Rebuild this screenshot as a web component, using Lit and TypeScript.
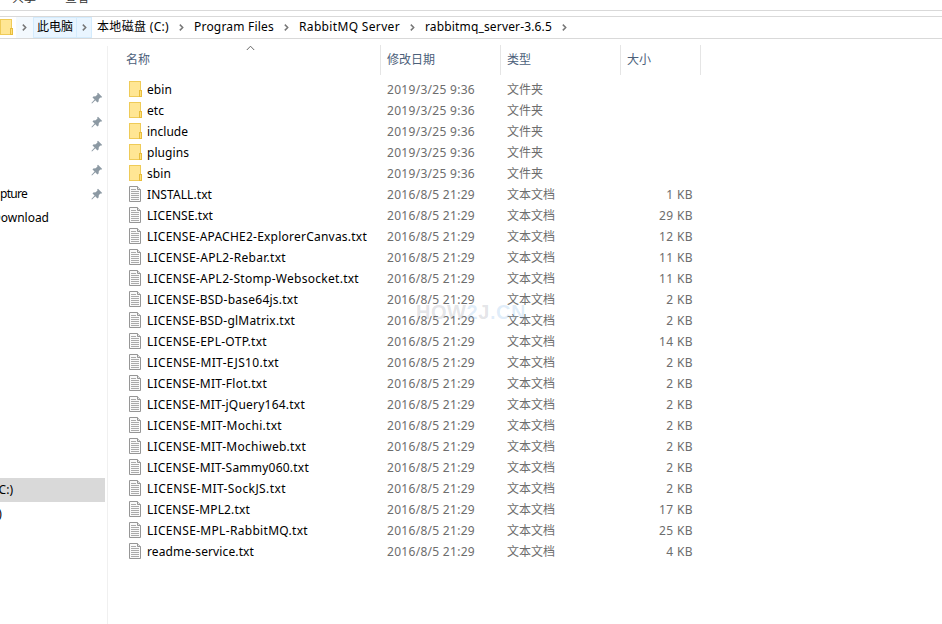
import { LitElement, html, css, svg } from "lit";
import { customElement } from "lit/decorators.js";

type Row = { name: string; size?: string; w: number };

const rows: Row[] = [
  { name: "ebin", w: 25 },
  { name: "etc", w: 17 },
  { name: "include", w: 41 },
  { name: "plugins", w: 42 },
  { name: "sbin", w: 24 },
  { name: "INSTALL.txt", size: "1 KB", w: 65 },
  { name: "LICENSE.txt", size: "29 KB", w: 66 },
  { name: "LICENSE-APACHE2-ExplorerCanvas.txt", size: "12 KB", w: 220 },
  { name: "LICENSE-APL2-Rebar.txt", size: "11 KB", w: 139 },
  { name: "LICENSE-APL2-Stomp-Websocket.txt", size: "11 KB", w: 212 },
  { name: "LICENSE-BSD-base64js.txt", size: "2 KB", w: 151 },
  { name: "LICENSE-BSD-glMatrix.txt", size: "2 KB", w: 148 },
  { name: "LICENSE-EPL-OTP.txt", size: "14 KB", w: 120 },
  { name: "LICENSE-MIT-EJS10.txt", size: "2 KB", w: 132 },
  { name: "LICENSE-MIT-Flot.txt", size: "2 KB", w: 120 },
  { name: "LICENSE-MIT-jQuery164.txt", size: "2 KB", w: 158 },
  { name: "LICENSE-MIT-Mochi.txt", size: "2 KB", w: 135 },
  { name: "LICENSE-MIT-Mochiweb.txt", size: "2 KB", w: 159 },
  { name: "LICENSE-MIT-Sammy060.txt", size: "2 KB", w: 162 },
  { name: "LICENSE-MIT-SockJS.txt", size: "2 KB", w: 139 },
  { name: "LICENSE-MPL2.txt", size: "17 KB", w: 103 },
  { name: "LICENSE-MPL-RabbitMQ.txt", size: "25 KB", w: 161 },
  { name: "readme-service.txt", size: "4 KB", w: 107 },
];

const crumbs: [string, number][] = [
  ["本地磁盘 (C:)", 72],
  ["Program Files", 80],
  ["RabbitMQ Server", 101],
  ["rabbitmq_server-3.6.5", 127],
];

const folder = svg`<svg class="ico" width="16" height="16" viewBox="0 0 16 16">
  <rect x="1.5" y=".5" width="11" height="15" fill="#ffe694" stroke="#efcb58"/>
  <rect x="11.5" y="9.5" width="2" height="6" fill="#ffe07a" stroke="#e8bd3c"/></svg>`;

const doc = svg`<svg class="ico" width="16" height="16" viewBox="0 0 16 16">
  <path d="M1.5 .5H9.5L12.5 3.5V15.5H1.5Z" fill="#fafafa" stroke="#969696"/>
  <path d="M9.5 .5V3.5H12.5" fill="#e4e4e4" stroke="#969696"/>
  <path d="M3 3.5H8M3 5.5H11M3 7.5H11M3 9.5H11M3 11.5H11M3 13.5H11" stroke="#aaa"/></svg>`;

const pin = svg`<svg width="12" height="12" viewBox="0 0 12 12">
  <path d="M7 .8L11.2 5L10 5.8L9.3 5.6L7.8 7.3L7.6 9.6L6.4 10.4L4.3 8.3L1 11.4L.4 10.9L3.6 7.5L1.5 5.5L2.3 4.4L4.7 4.2L6.5 2.6L6.2 1.6Z" fill="#8c99a3"/></svg>`;

const chevron = svg`<svg width="5" height="7" viewBox="0 0 5 7">
  <path d="M.8 .6L3.7 3.5L.8 6.4" fill="none" stroke="#777" stroke-width="1.5"/></svg>`;

@customElement("app-root")
export class AppRoot extends LitElement {
  static styles = css`
    :host { display: flex; flex-direction: column; position: relative; width: 942px; height: 624px; overflow: hidden; background: #fff; color: #000; font: 12px/21px "Noto Sans", "Noto Sans CJK SC", sans-serif; white-space: nowrap; }
    svg { display: block; flex: none; }
    .menu { height: 10px; flex: none; display: flex; gap: 29px; padding-left: 12px; border-bottom: 1px solid #d9d9d9; overflow: hidden; align-items: flex-end; color: #333; }
    .menu span { height: 21px; margin-bottom: 2px; }
    .address { height: 21px; flex: none; margin-top: 5px; display: flex; border: solid #d9d9d9; border-width: 1px 0; }
    .crumb { display: flex; align-items: center; }
    .crumb span { margin: -2px 4px 0; }
    .home { width: 14px; margin-left: -1px; margin-right: 3px; margin-top: -1px; }
    .arrow { width: 17px; display: flex; justify-content: center; align-items: center; padding-bottom: 1px; box-sizing: border-box; }
    .arrow.first { background: #f3f9fe; }
    .hot { background: #e9f5ff; box-shadow: inset 0 0 0 1px #d3ebfd; }
    .arrow.hot { width: 16px; margin-left: -1px; margin-right: 1px; }
    .main { flex: 1; display: flex; }
    .nav { width: 107px; border-right: 1px solid #f0f0f0; flex: none; margin-top: 7px; padding-top: 40px; overflow: hidden; }
    .item { height: 24px; display: flex; align-items: center; width: 105px; }
    .item .label { flex: 1; padding-bottom: 1px; }
    .item svg { margin-right: 2px; }
    .selected { background: #d9d9d9; }
    .gap { height: 248px; }
    .shift { margin-left: -5px; }
    .download { margin-left: -8px; padding-bottom: 3px; }
    .files { width: 593px; }
    .head { display: grid; grid-template-columns: 273px 120px 120px 80px; height: 30px; padding-top: 6px; margin-bottom: 4px; color: #4c607a; position: relative; }
    .head div { border-right: 1px solid #e5e5e5; padding-left: 6px; line-height: 30px; }
    .head div:first-child { padding-left: 18px; }
    .sort { position: absolute; left: 138px; top: 6px; }
    .row { display: grid; grid-template-columns: 273px 120px 120px 72px; height: 21px; color: #6d6d6d; }
    .row > * { padding-left: 6px; }
    .row .name { display: flex; align-items: center; padding-left: 20px; color: #000; }
    .row .ico { margin-top: -1px; }
    .ico { margin-right: 3px; }
    .size { text-align: right; letter-spacing: .4px; }
    .mark { position: absolute; left: 416px; top: 300px; font: bold 20px/24px "Liberation Sans", sans-serif; color: rgba(90, 100, 120, .18); }
    .mark i { font-style: normal; color: rgba(60, 140, 220, .16); }
  `;

  firstUpdated() {
    document.fonts.ready.then(() => this.fit());
    this.fit();
  }

  private fit() {
    this.renderRoot.querySelectorAll<HTMLElement>("[data-w]").forEach((el) => {
      el.style.letterSpacing = "0";
      const diff = Number(el.dataset.w) - el.getBoundingClientRect().width;
      el.style.letterSpacing = diff / (el.textContent ?? " ").length + "px";
    });
  }

  render() {
    return html`
      <div class="menu"><span>共享</span><span>查看</span></div>
      <div class="address">
        <div class="crumb home">${folder}</div>
        <div class="arrow first">${chevron}</div>
        <div class="crumb hot"><span data-w="36">此电脑</span></div>
        <div class="arrow hot">${chevron}</div>
        ${crumbs.map(
          ([t, w]) => html`<div class="crumb"><span data-w=${w}>${t}</span></div><div class="arrow">${chevron}</div>`
        )}
      </div>
      <div class="main">
        <div class="nav">
          ${["", "", "", ""].map(() => html`<div class="item"><span class="label"></span>${pin}</div>`)}
          <div class="item"><span class="label"><span data-w="27">pture</span></span>${pin}</div>
          <div class="item"><span class="label download"><span data-w="57">Download</span></span></div>
          <div class="gap"></div>
          <div class="item selected"><span class="label shift">(C:)</span></div>
          <div class="item"><span class="label shift">:)</span></div>
        </div>
        <div class="files">
          <div class="head">
            <div>名称</div><div>修改日期</div><div>类型</div><div>大小</div>
            <svg class="sort" width="9" height="6" viewBox="0 0 9 6"><path d="M.8 5L4.5 1.2L8.2 5" fill="none" stroke="#666"/></svg>
          </div>
          ${rows.map(
            (r) => html`<div class="row">
              <div class="name">${r.size ? doc : folder}<span data-w=${r.w}>${r.name}</span></div>
              <div><span data-w="88">${r.size ? "2016/8/5 21:29" : "2019/3/25 9:36"}</span></div>
              <div>${r.size ? "文本文档" : "文件夹"}</div>
              <div class="size">${r.size ?? ""}</div>
            </div>`
          )}
        </div>
      </div>
      <div class="mark" data-w="110">HOW<i>2</i>J<i>.CN</i></div>
    `;
  }
}
